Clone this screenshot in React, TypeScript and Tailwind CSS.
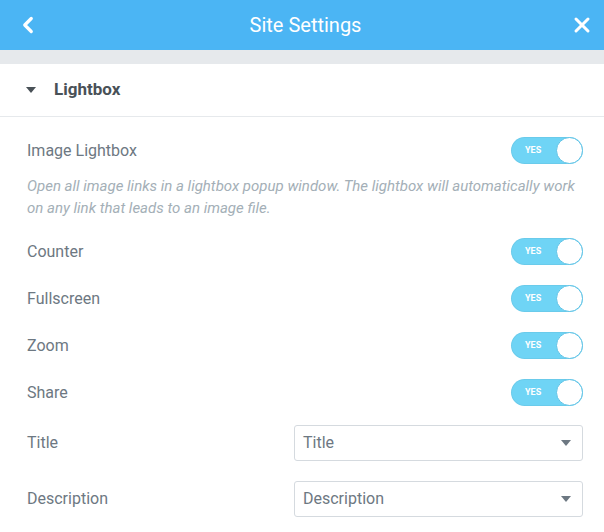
import { ChevronLeft, X } from 'lucide-react';

const TOGGLES = ['Counter', 'Fullscreen', 'Zoom', 'Share'];

function Toggle() {
  return (
    <div className="relative flex h-[27px] w-[72px] items-center rounded-full bg-[#6fd4f5] shadow-[inset_0_0_0_1px_rgba(0,0,0,0.04)]">
      <span className="ml-[14px] text-[9px] font-bold text-white">YES</span>
      <span className="absolute right-0 top-0 h-[27px] w-[27px] rounded-full border border-[#5fc3e6] bg-white" />
    </div>
  );
}

function Caret({ className }: { className?: string }) {
  return (
    <svg width="10" height="6" viewBox="0 0 10 6" className={className}>
      <path d="M0 0h10L5 6z" fill="currentColor" />
    </svg>
  );
}

function Select({ value }: { value: string }) {
  return (
    <div className="flex h-[36px] w-[289px] items-center justify-between rounded-[3px] border border-[#d5dadf] pl-[8px] pr-[11px] text-[16px] text-[#6d7882]">
      <span>{value}</span>
      <Caret className="text-[#6d7882]" />
    </div>
  );
}

export default function App() {
  return (
    <div className="h-[532px] w-[604px] overflow-hidden bg-white font-['Roboto',sans-serif]">
      <div className="flex h-[50px] items-center justify-between bg-[#4bb5f4] pl-[15px] pr-[10px] text-white">
        <ChevronLeft size={26} strokeWidth={3} />
        <div className="text-[20px]">Site Settings</div>
        <X size={24} strokeWidth={3} />
      </div>
      <div className="h-[14px] bg-[#e6e9ec]" />
      <div className="flex h-[53px] items-center gap-[18px] border-b border-[#e6e9ec] pl-[26px]">
        <Caret className="text-[#495157]" />
        <span className="text-[17px] font-bold text-[#495157]">Lightbox</span>
      </div>
      <div className="pl-[27px] pr-[21px] text-[16px] text-[#6d7882]">
        <div className="mt-[20px] flex h-[27px] items-center justify-between">
          <span>Image Lightbox</span>
          <Toggle />
        </div>
        <p className="mt-[11px] text-[15px] italic leading-[22px] text-[#a4afb7]">
          Open all image links in a lightbox popup window. The lightbox will automatically work on any link that leads to an image file.
        </p>
        <div className="mt-[19px] flex flex-col gap-[20px]">
          {TOGGLES.map(t => (
            <div key={t} className="flex h-[27px] items-center justify-between">
              <span>{t}</span>
              <Toggle />
            </div>
          ))}
        </div>
        <div className="mt-[19px] flex items-center justify-between">
          <span>Title</span>
          <Select value="Title" />
        </div>
        <div className="mt-[20px] flex items-center justify-between">
          <span>Description</span>
          <Select value="Description" />
        </div>
      </div>
    </div>
  );
}
